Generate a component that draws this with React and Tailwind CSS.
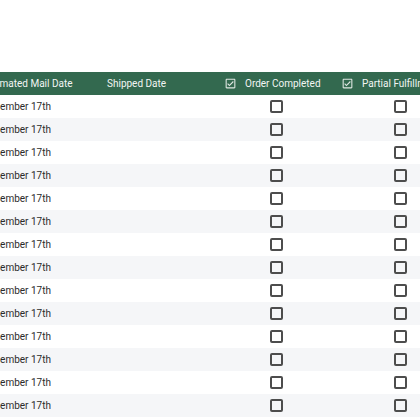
import React from 'react';

const rows = Array.from({ length: 15 }, () => ({ mail: 'December 17th', shipped: '' }));

function HeaderCheckIcon() {
  return (
    <svg viewBox="0 0 24 24" className="w-[13px] h-[13px] shrink-0" fill="#dfe7e2">
      <path d="M19 3H5c-1.11 0-2 .9-2 2v14c0 1.1.89 2 2 2h14c1.11 0 2-.9 2-2V5c0-1.1-.89-2-2-2zm0 16H5V5h14v14zM17.99 9l-1.41-1.42-6.59 6.59-2.58-2.57-1.42 1.41 4 3.99z" />
    </svg>
  );
}

function Box() {
  return <div className="w-[13px] h-[13px] border-2 border-[#4d4d4d] rounded-[2px]" />;
}

export default function App() {
  return (
    <div className="w-[420px] h-[420px] overflow-hidden bg-white pt-[72px]" style={{ fontFamily: 'Roboto, "Liberation Sans", sans-serif' }}>
      <div className="-ml-[27px] w-[600px] text-[10px]">
        {/* Header */}
        <div className="flex h-[23px] items-center bg-[#33694f] text-[#f2f5f3]">
          <div className="w-[124px] px-[10px] whitespace-nowrap">Estimated Mail Date</div>
          <div className="w-[117px] px-[10px] whitespace-nowrap">Shipped Date</div>
          <div className="w-[117px] px-[10px] flex items-center gap-[8px] whitespace-nowrap">
            <HeaderCheckIcon />
            <span>Order Completed</span>
          </div>
          <div className="w-[140px] px-[10px] flex items-center gap-[8px] whitespace-nowrap">
            <HeaderCheckIcon />
            <span>Partial Fulfillment</span>
          </div>
        </div>

        {/* Rows */}
        {rows.map((r, i) => (
          <div key={i} className={`flex h-[23px] items-center text-[#2b2b2b] ${i % 2 === 1 ? 'bg-[#f5f6f8]' : 'bg-white'}`}>
            <div className="w-[124px] px-[10px] whitespace-nowrap">{r.mail}</div>
            <div className="w-[117px] px-[10px] whitespace-nowrap">{r.shipped}</div>
            <div className="w-[117px] flex justify-start pl-[56px]">
              <Box />
            </div>
            <div className="w-[140px] flex justify-start pl-[63px]">
              <Box />
            </div>
          </div>
        ))}
      </div>
    </div>
  );
}
